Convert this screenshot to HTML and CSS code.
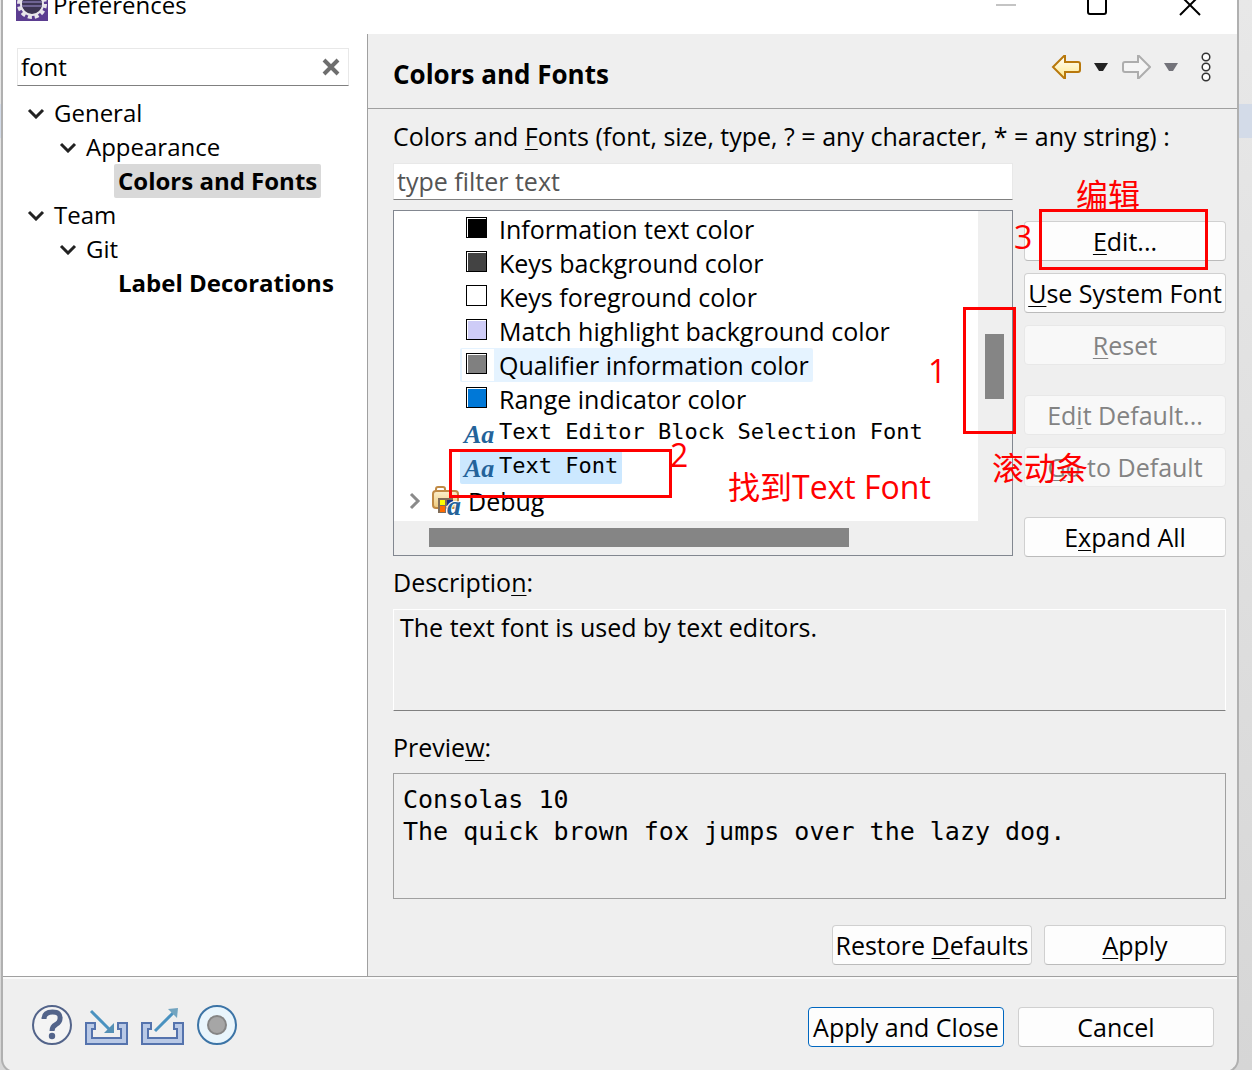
FILE: index.html
```html
<!DOCTYPE html>
<html lang="en">
<head>
<meta charset="utf-8">
<title>Preferences</title>
<link rel="stylesheet" href="styles.css">
</head>
<body>
<div class="desktop">
  <div class="window">
    <header class="titlebar">
      <svg class="app-icon" width="32" height="32" viewBox="0 0 32 32" aria-hidden="true">
        <rect width="32" height="32" fill="#5b3d90"/>
        <circle cx="16" cy="15" r="13" fill="none" stroke="#e8e6ea" stroke-width="4" stroke-dasharray="4 2.800"/>
        <circle cx="16" cy="15" r="11" fill="#3d3553" stroke="#e8e6ea" stroke-width="2"/>
        <path d="M6 13h20M6 17h20" stroke="#6f6494" stroke-width="2"/>
      </svg>
      <h1 class="title">Preferences</h1>
      <div class="window-controls">
        <button class="plain" aria-label="Minimize" disabled><svg width="22" height="22" viewBox="0 0 22 22"><path d="M1 11h20" stroke="#c4c4c4" stroke-width="2"/></svg></button>
        <button class="plain" aria-label="Maximize"><svg width="22" height="22" viewBox="0 0 22 22"><rect x="1" y="1" width="18" height="19" rx="2" fill="none" stroke="#000" stroke-width="2"/></svg></button>
        <button class="plain" aria-label="Close"><svg width="22" height="22" viewBox="0 0 22 22"><path d="M1 1l20 20M21 1L1 21" stroke="#000" stroke-width="2"/></svg></button>
      </div>
    </header>

    <div class="content">
      <nav class="sidebar">
        <div class="search">
          <input class="search-input" type="text" value="font" aria-label="Filter preferences">
          <button class="plain" aria-label="Clear"><svg width="18" height="18" viewBox="0 0 18 18"><path d="M2 2l14 14M16 2L2 16" stroke="#6e6e6e" stroke-width="4"/></svg></button>
        </div>
        <ul class="nav-tree">
          <li class="nav-row"><svg class="chevron" width="18" height="12" viewBox="0 0 18 12"><path d="M2 3l7 7 7-7" fill="none" stroke="#222" stroke-width="3"/></svg><span>General</span></li>
          <li class="nav-row level-2"><svg class="chevron" width="18" height="12" viewBox="0 0 18 12"><path d="M2 3l7 7 7-7" fill="none" stroke="#222" stroke-width="3"/></svg><span>Appearance</span></li>
          <li class="nav-row level-3"><span class="leaf selected">Colors and Fonts</span></li>
          <li class="nav-row"><svg class="chevron" width="18" height="12" viewBox="0 0 18 12"><path d="M2 3l7 7 7-7" fill="none" stroke="#222" stroke-width="3"/></svg><span>Team</span></li>
          <li class="nav-row level-2"><svg class="chevron" width="18" height="12" viewBox="0 0 18 12"><path d="M2 3l7 7 7-7" fill="none" stroke="#222" stroke-width="3"/></svg><span>Git</span></li>
          <li class="nav-row level-3"><span class="leaf">Label Decorations</span></li>
        </ul>
      </nav>

      <main class="page">
        <div class="page-header">
          <h2 class="page-title">Colors and Fonts</h2>
          <div class="page-tools">
            <button class="plain" aria-label="Back"><svg width="30" height="26" viewBox="0 0 30 26"><defs><linearGradient id="gold" x2="0" y2="1"><stop offset="0" stop-color="#fff"/><stop offset="1" stop-color="#ffe88a"/></linearGradient></defs><path d="M2 13L13 2h1v6h13a2 2 0 0 1 2 2v6a2 2 0 0 1-2 2H14v6h-1z" fill="url(#gold)" stroke="#b8780c" stroke-width="2"/></svg></button>
            <button class="plain" aria-label="Back history"><svg width="14" height="8" viewBox="0 0 14 8"><path d="M0 0h14L9 8H5z" fill="#222"/></svg></button>
            <button class="plain forward" aria-label="Forward" disabled><svg width="30" height="26" viewBox="0 0 30 26"><path d="M29 13L18 2h-1v6H4a2 2 0 0 0-2 2v6a2 2 0 0 0 2 2h13v6h1z" fill="#f5f5f5" stroke="#adadad" stroke-width="2"/></svg></button>
            <button class="plain" aria-label="Forward history" disabled><svg width="14" height="8" viewBox="0 0 14 8"><path d="M0 0h14L9 8H5z" fill="#73737a"/></svg></button>
            <button class="plain view-menu" aria-label="View menu"><svg width="10" height="30" viewBox="0 0 10 30"><g fill="#fff" stroke="#333" stroke-width="1.500"><circle cx="5" cy="5" r="3.800"/><circle cx="5" cy="15" r="3.800"/><circle cx="5" cy="25" r="3.800"/></g></svg></button>
          </div>
        </div>

        <div class="page-body">
          <label class="caption" for="filter">Colors and <u>F</u>onts (font, size, type, ? = any character, * = any string) :</label>
          <div class="chooser">
            <div class="list-column">
              <input class="filter" id="filter" type="text" placeholder="type filter text">
              <div class="tree-box">
                <ul class="tree">
                  <li class="row"><span class="item"><i class="swatch black"></i>Information text color</span></li>
                  <li class="row"><span class="item"><i class="swatch charcoal"></i>Keys background color</span></li>
                  <li class="row"><span class="item"><i class="swatch white"></i>Keys foreground color</span></li>
                  <li class="row"><span class="item"><i class="swatch lilac"></i>Match highlight background color</span></li>
                  <li class="row"><span class="item hovered"><span class="icon-cell"><i class="swatch gray"></i></span>Qualifier information color</span></li>
                  <li class="row"><span class="item"><i class="swatch blue"></i>Range indicator color</span></li>
                  <li class="row"><span class="item mono"><b class="aa">Aa</b>Text Editor Block Selection Font</span></li>
                  <li class="row"><span class="item mono chosen"><b class="aa">Aa</b>Text Font</span></li>
                  <li class="row folder">
                    <svg width="12" height="18" viewBox="0 0 12 18"><path d="M2 2l7 7-7 7" fill="none" stroke="#8a8a8a" stroke-width="3"/></svg>
                    <svg width="32" height="32" viewBox="0 0 32 32"><defs><linearGradient id="folder" x2="0" y2="1"><stop offset="0" stop-color="#fbefcc"/><stop offset="1" stop-color="#efca7c"/></linearGradient></defs><path d="M4 6V4q0-2 2-2h5q2 0 2 2v2" fill="#fff" stroke="#c08a45" stroke-width="2"/><rect x="1" y="6" width="25" height="17" rx="3" fill="url(#folder)" stroke="#c08a45" stroke-width="2"/><path d="M6 13h15v8h-7v7H6z" fill="#806c58"/><path d="M8 15h5v5H8z" fill="#ff0"/><path d="M15 15h6v5h-6z" fill="#1c2f80"/><path d="M8 21h5v6H8z" fill="#ff6a00"/><text class="icon-letter" x="15" y="30">a</text></svg>
                    <span>Debug</span>
                  </li>
                </ul>
                <div class="scroll-y"><div class="thumb-y"></div></div>
                <div class="scroll-x"><div class="thumb-x"></div></div>
              </div>
            </div>
            <div class="actions">
              <button class="btn"><u>E</u>dit...</button>
              <button class="btn"><u>U</u>se System Font</button>
              <button class="btn" disabled><u>R</u>eset</button>
              <button class="btn group" disabled>Ed<u>i</u>t Default...</button>
              <button class="btn" disabled><u>G</u>o to Default</button>
              <button class="btn group">E<u>x</u>pand All</button>
            </div>
          </div>
          <label class="caption" for="description">Descriptio<u>n</u>:</label>
          <textarea class="description" id="description" readonly>The text font is used by text editors.</textarea>
          <label class="caption" for="preview">Previe<u>w</u>:</label>
          <textarea class="preview" id="preview" readonly>Consolas 10
The quick brown fox jumps over the lazy dog.</textarea>
          <div class="page-buttons">
            <button class="btn restore">Restore <u>D</u>efaults</button>
            <button class="btn apply"><u>A</u>pply</button>
          </div>
        </div>
      </main>
    </div>

    <footer class="footer">
      <div class="footer-tools">
        <button class="plain" aria-label="Help"><svg width="40" height="40" viewBox="0 0 40 40"><circle cx="20" cy="20" r="19" fill="#f4f4f4" stroke="#53648a" stroke-width="2"/><path d="M12 14q0-7 8.500-7t7.500 7q0 3-4 5.500-4 2-4 6.500" fill="none" stroke="#53648a" stroke-width="5"/><circle cx="20" cy="31" r="3.200" fill="#53648a"/></svg></button>
        <button class="plain" aria-label="Import"><svg width="43" height="40" viewBox="0 0 43 40"><path d="M1 18h9v6H7v9h29v-9h-3v-6h9v21H1z" fill="#b9c9e6" stroke="#5573ad" stroke-width="2"/><path d="M6 6l19 19" stroke="#4a92c0" stroke-width="3"/><path d="M29 18v10H19z" fill="#5590b5"/></svg></button>
        <button class="plain" aria-label="Export"><svg width="43" height="40" viewBox="0 0 43 40"><path d="M1 18h9v6H7v9h29v-9h-3v-6h9v21H1z" fill="#b9c9e6" stroke="#5573ad" stroke-width="2"/><path d="M14 26L33 7" stroke="#4a92c0" stroke-width="3"/><path d="M27 4l10-1-1 10z" fill="#72a4c0"/></svg></button>
        <button class="plain" aria-label="Record"><svg width="40" height="40" viewBox="0 0 40 40"><circle cx="20" cy="20" r="19" fill="#e9f5fc" stroke="#3c74a6" stroke-width="2"/><circle cx="20" cy="20" r="9" fill="#a6a6a6" stroke="#858585" stroke-width="2"/></svg></button>
      </div>
      <div class="footer-buttons">
        <button class="btn primary">Apply and Close</button>
        <button class="btn">Cancel</button>
      </div>
    </footer>
  </div>

  <div class="marks" lang="zh-CN">
    <div class="frame frame-scroll"></div>
    <div class="frame frame-item"></div>
    <div class="frame frame-edit"></div>
    <span class="note note-1">1</span>
    <span class="note note-2">2</span>
    <span class="note note-3">3</span>
    <span class="note note-edit">编辑</span>
    <span class="note note-scroll">滚动条</span>
    <span class="note note-find">找到Text Font</span>
  </div>
</div>
</body>
</html>
```
FILE: styles.css
```css
* { box-sizing: border-box; }

body {
  margin: 0;
  font: 25px/34px "Open Sans", "Noto Sans", "Noto Sans CJK SC", sans-serif;
  color: #000;
}

ul { margin: 0; padding: 0; list-style: none; }
svg { display: block; flex: none; }
u { text-decoration-thickness: 1px; text-underline-offset: 3px; }
input, textarea, button { font: inherit; color: inherit; }

.desktop {
  position: relative;
  height: 100vh;
  overflow: hidden;
  display: flex;
  padding: 0 13px 0 1px;
  background: linear-gradient(to bottom, transparent 104px, #d3dbe8 104px, #d3dbe8 138px, transparent 138px), linear-gradient(#e8e8e8, #d6d6d6);
}

.window {
  flex: 1;
  min-width: 0;
  display: flex;
  flex-direction: column;
  margin: -24px 0 -3px;
  border: 2px solid #b0b0b0;
  border-top: 0;
  border-radius: 0 0 14px 14px;
  background: #efefef;
  overflow: hidden;
}

.plain {
  display: flex;
  padding: 0;
  border: 0;
  background: none;
}

.titlebar {
  flex: none;
  height: 58px;
  display: flex;
  align-items: center;
  gap: 5px;
  padding: 0 36px 0 13px;
  background: #fff;
}
.title { margin: 0; font-size: 24px; font-weight: 400; }
.window-controls { display: flex; gap: 70px; margin-left: auto; }

.content {
  flex: 1;
  min-height: 0;
  display: flex;
  border-bottom: 1px solid #a0a0a0;
}

.sidebar {
  flex: none;
  width: 365px;
  padding: 14px 18px 0 14px;
  border-right: 1px solid #a0a0a0;
  background: #fff;
  font-size: 24px;
}
.search {
  height: 38px;
  display: flex;
  align-items: center;
  padding: 0 8px 0 3px;
  border: 1px solid #e8e8e8;
  border-bottom-color: #808080;
}
.search-input {
  flex: 1;
  min-width: 0;
  padding: 0;
  border: 0;
  outline: 0;
  background: none;
}
.nav-tree { padding-top: 10px; }
.nav-row {
  height: 34px;
  display: flex;
  align-items: center;
  gap: 9px;
  padding-left: 10px;
}
.level-2 { padding-left: 42px; }
.level-3 { padding-left: 97px; }
.leaf { padding: 0 4px; border-radius: 2px; font-weight: 700; white-space: nowrap; }
.selected { background: #d9d9d9; }

.page {
  flex: 1;
  min-width: 0;
  display: flex;
  flex-direction: column;
}
.page-header {
  height: 75px;
  flex: none;
  display: flex;
  justify-content: space-between;
  padding: 0 26px 0 25px;
  border-bottom: 1px solid #a0a0a0;
}
.page-title { margin: 0; font-size: 26px; line-height: 80px; }
.page-tools { display: flex; align-items: center; gap: 13px; height: 66px; }
.view-menu { margin-left: 10px; }

.page-body {
  flex: 1;
  min-height: 0;
  display: flex;
  flex-direction: column;
  padding: 10px 11px 11px 25px;
}
.caption { flex: none; white-space: nowrap; }

.chooser {
  display: flex;
  gap: 11px;
  margin: 10px 0 8px;
}
.list-column { flex: 1; min-width: 0; }
.filter {
  display: block;
  width: 100%;
  height: 37px;
  padding: 0 3px 2px;
  border: 1px solid #e8e8e8;
  border-bottom-color: #808080;
  background: #fff;
}
.filter::placeholder { color: #555; opacity: 1; }

.tree-box {
  display: grid;
  grid-template: 1fr 34px / 1fr 34px;
  margin-top: 10px;
  border: 1px solid #828790;
}
.tree {
  min-width: 0;
  padding: 1px 0 3px;
  background: #fff;
  overflow: hidden;
}
.row {
  height: 34px;
  display: flex;
  align-items: center;
  padding-left: 66px;
  line-height: 32px;
}
.item {
  height: 34px;
  display: flex;
  align-items: center;
  padding-right: 4px;
  border-radius: 2px;
  white-space: nowrap;
}
.mono { font: 22px/32px "DejaVu Sans Mono", monospace; align-items: flex-start; }
.hovered { background: #e5f3ff; }
.chosen { background: #cce8ff; }
.icon-cell { height: 32px; margin: 0 5px 0 2px; padding-right: 2px; display: flex; align-items: center; background: #fff; }
.swatch {
  flex: none;
  width: 21px;
  height: 21px;
  margin: 0 12px 3px 6px;
  border: 1px solid #000;
  box-shadow: inset 1px 1px #fff;
}
.icon-cell .swatch { margin: 0 5px 3px 4px; }
.black { background: #000; }
.charcoal { background: #434343; }
.white { background: #fff; }
.lilac { background: #ceccf7; }
.gray { background: #808080; }
.blue { background: #0078d7; }
.aa {
  width: 39px;
  padding-left: 4px;
  font: italic bold 26px/38px "Liberation Serif", serif;
  color: #24639a;
}
.folder { gap: 6px; padding-left: 15px; }
.folder svg + svg { margin: 0 -2px 0 5px; }
.icon-letter {
  font: italic bold 28px "Liberation Serif", serif;
  fill: #24639a;
  stroke: #fff;
  stroke-width: 2px;
  paint-order: stroke;
}
.scroll-y { padding: 123px 8px 0 7px; }
.thumb-y { height: 65px; background: #858585; }
.scroll-x { grid-column: 1 / -1; padding: 7px 0 0 35px; }
.thumb-x { width: 72%; height: 19px; background: #858585; }

.actions {
  flex: none;
  width: 202px;
  display: flex;
  flex-direction: column;
  gap: 12px;
  padding-top: 58px;
}
.btn {
  height: 40px;
  padding: 0;
  border: 1px solid #d0d0d0;
  border-bottom-color: #bbb;
  border-radius: 4px;
  background: #fdfdfd;
  line-height: 36px;
  white-space: nowrap;
}
.btn:disabled { border-color: #e8e8e8; background: #f8f8f8; color: #838383; }
.group { margin-top: 18px; }

.description, .preview {
  flex: none;
  display: block;
  width: 100%;
  margin: 10px 0 19px;
  background: none;
  outline: 0;
  resize: none;
  overflow: hidden;
}
.description {
  height: 102px;
  padding: 0 6px;
  border: 1px solid #fff;
  border-bottom-color: #808080;
}
.preview {
  flex: 1;
  padding: 10px 9px;
  border: 1px solid #a0a0a0;
  margin: 9px 0 26px;
  font: 25px/32px "DejaVu Sans Mono", monospace;
}
.page-buttons { display: flex; justify-content: flex-end; gap: 12px; }
.restore { width: 200px; }
.apply { width: 182px; }

.footer {
  flex: none;
  display: flex;
  justify-content: space-between;
  padding: 28px 23px 24px 29px;
  border-top: 2px solid #fafafa;
}
.footer-tools { display: flex; align-items: flex-start; gap: 13px; margin-top: -2px; }
.footer-buttons { display: flex; gap: 14px; }
.footer-buttons .btn { width: 196px; }
.footer-buttons .primary { border-color: #0067c0; }

/* Tutorial marks laid over the dialog */
.frame { position: absolute; border: 3px solid #f00; }
.frame-scroll { left: 963px; top: 307px; width: 53px; height: 127px; }
.frame-item { left: 449px; top: 449px; width: 223px; height: 49px; }
.frame-edit { left: 1039px; top: 209px; width: 169px; height: 61px; }
.note {
  position: absolute;
  font-size: 32px;
  line-height: 40px;
  color: #f00;
  white-space: nowrap;
}
.note-1 { left: 928px; top: 351px; }
.note-2 { left: 670px; top: 435px; }
.note-3 { left: 1014px; top: 217px; }
.note-edit { left: 1076px; top: 175px; }
.note-scroll { left: 992px; top: 448px; }
.note-find { left: 728px; top: 467px; }
```
